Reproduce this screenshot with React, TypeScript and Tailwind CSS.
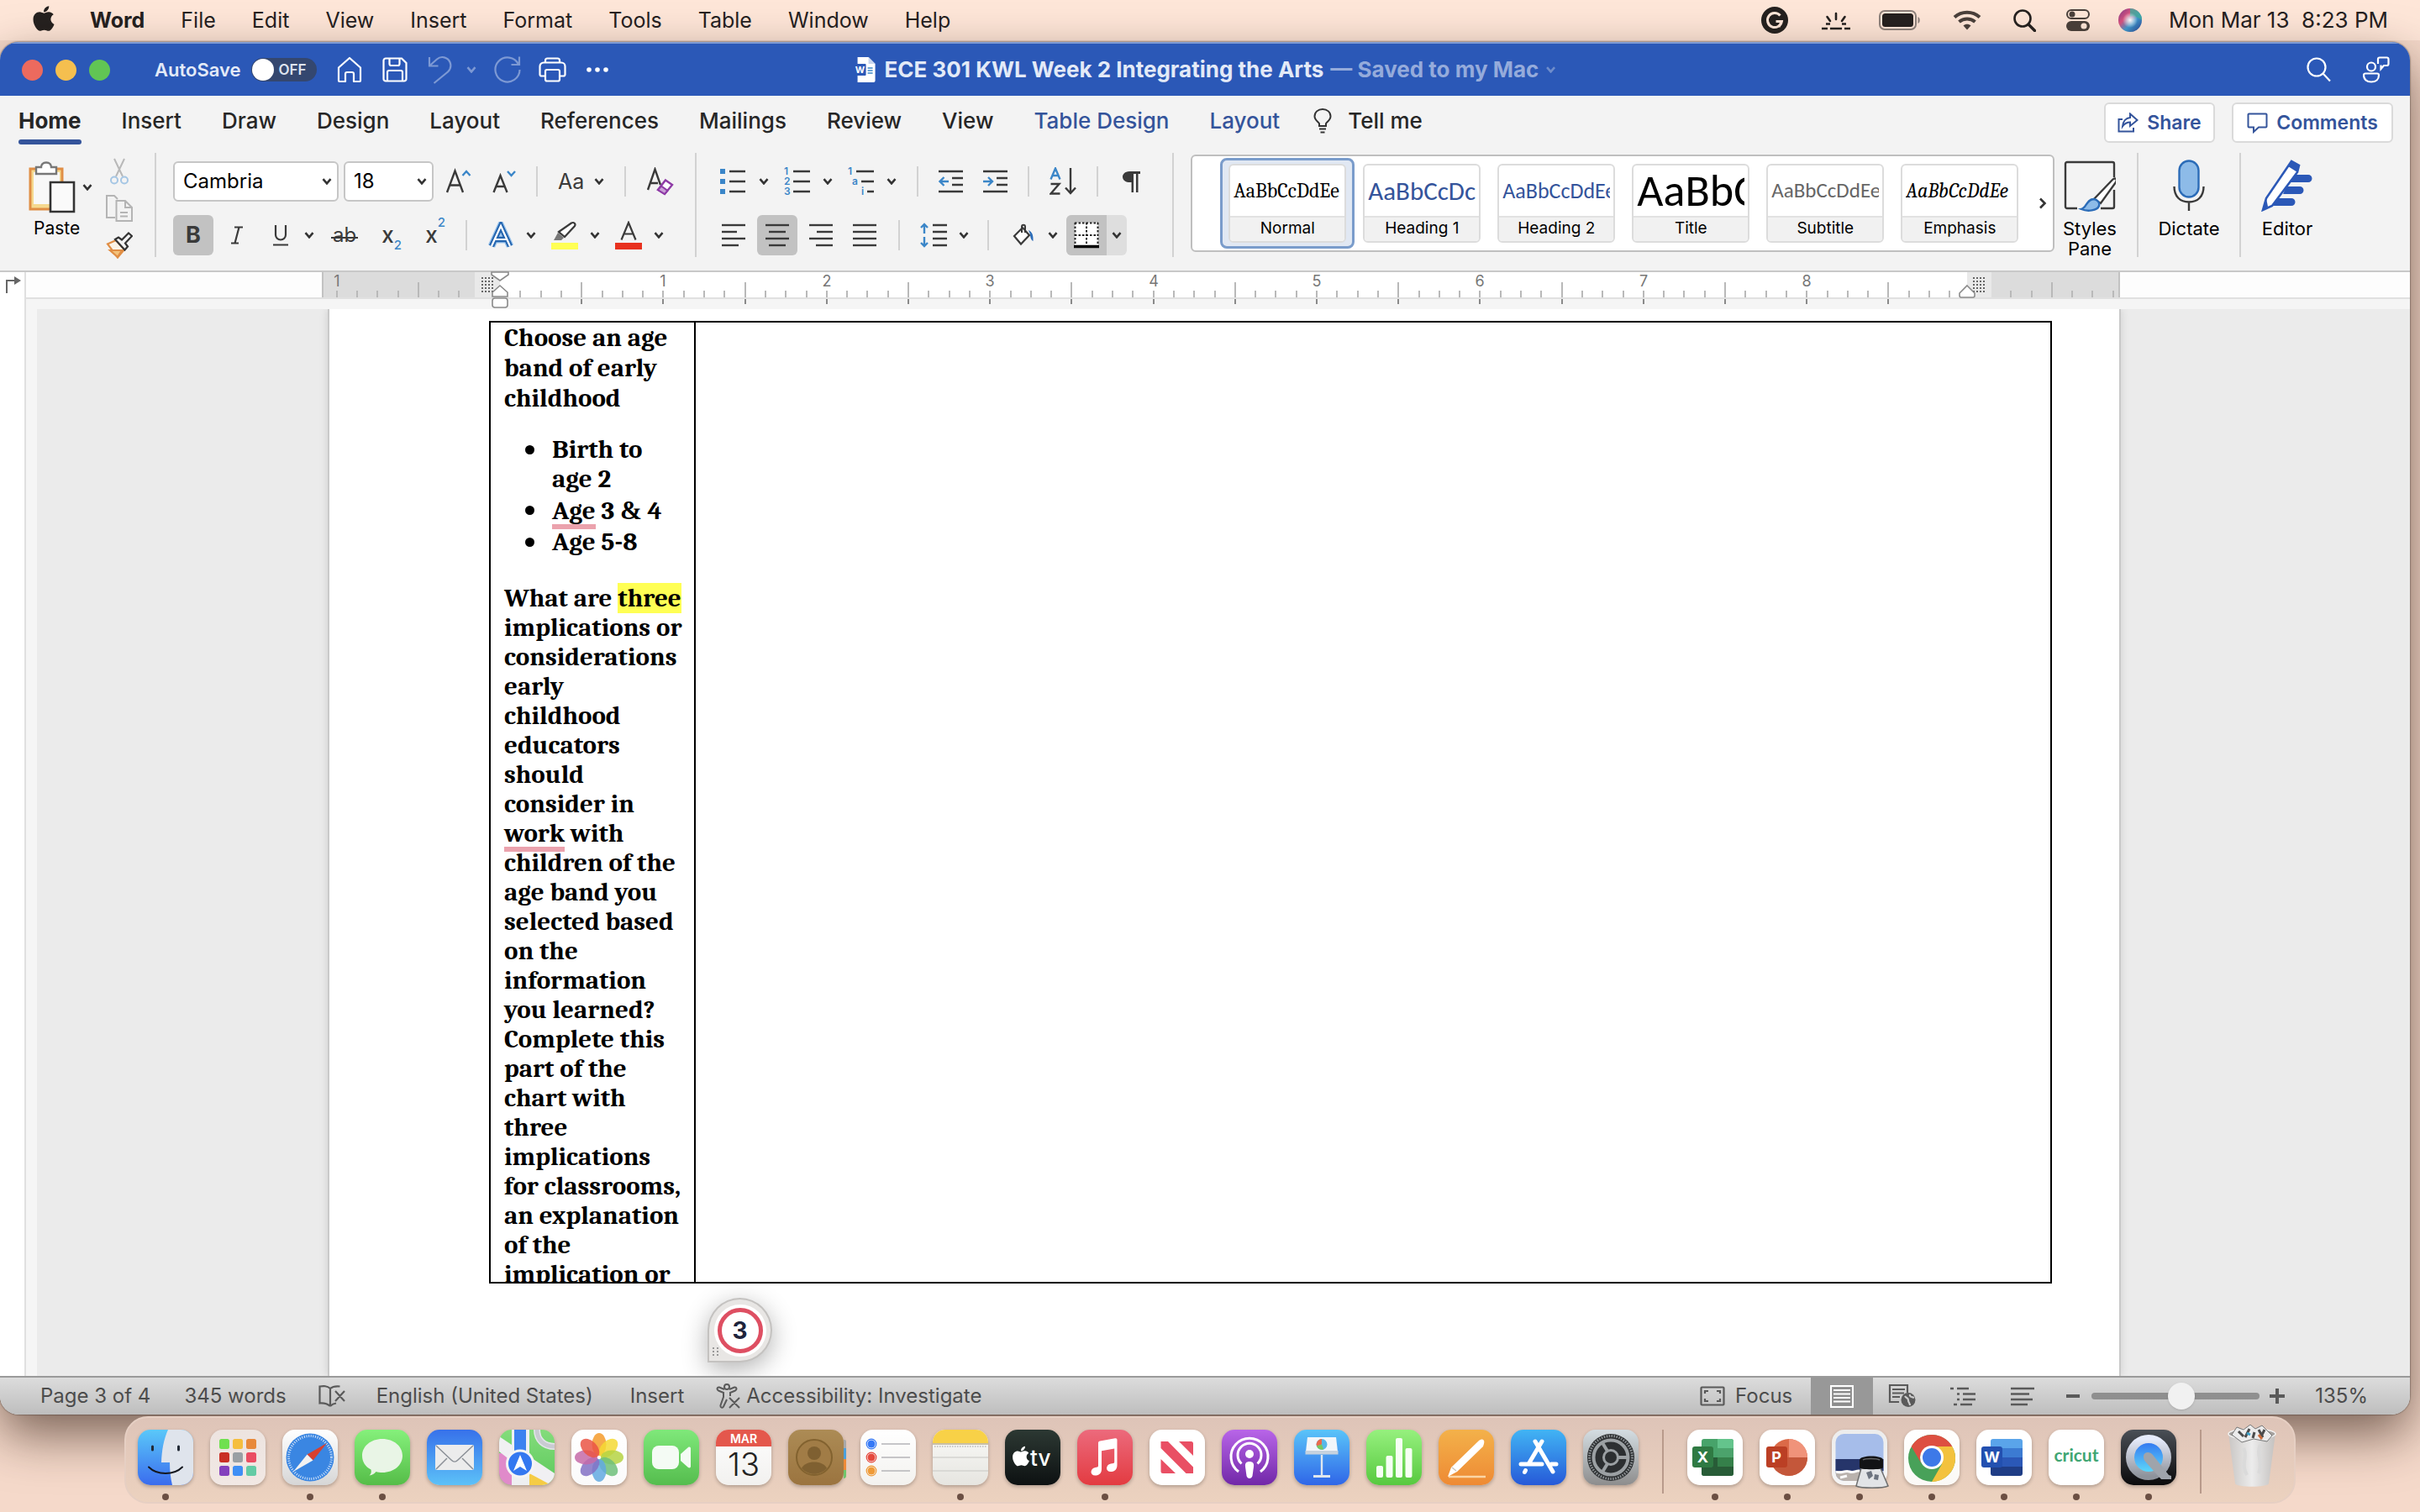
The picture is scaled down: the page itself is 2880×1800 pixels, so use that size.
import React from "react";
import { FaApple } from "react-icons/fa";

const INK = "#3a3a3a";
const BLUE = "#3b86c8";

/* ---------- small shared pieces ---------- */

function Chevron({ color = "#333", className = "" }: { color?: string; className?: string }) {
  return (
    <svg width="12" height="8" viewBox="0 0 12 8" fill="none" className={`shrink-0 ${className}`}>
      <path d="M1.500 1.200 6 6.400l4.500-5.200" stroke={color} strokeWidth="2.600" />
    </svg>
  );
}

function Sep({ tall = false, className = "" }: { tall?: boolean; className?: string }) {
  return <span className={`block w-[2px] shrink-0 bg-[#d2d2d2] ${tall ? "h-[124px]" : "h-9"} ${className}`} />;
}

function Tool({ label, className = "", children }: { label: string; className?: string; children: React.ReactNode }) {
  return (
    <button type="button" aria-label={label} className={`flex shrink-0 items-center justify-center ${className}`}>
      {children}
    </button>
  );
}

/* ---------- menu bar ---------- */

const menus = ["File", "Edit", "View", "Insert", "Format", "Tools", "Table", "Window", "Help"];

function MenuBar() {
  return (
    <header className="flex h-12 shrink-0 items-center bg-[#fee6d8] pl-[38px] pr-[38px] text-[25px] leading-8 text-[#25211f]">
      <FaApple size={34} className="mb-1 w-7" />
      <nav className="ml-[41px] flex gap-[43px]">
        <button type="button" className="font-bold">Word</button>
        {menus.map((m) => (
          <button type="button" key={m}>{m}</button>
        ))}
      </nav>
      <div className="ml-auto flex items-center">
        <svg width="32" height="32" viewBox="0 0 32 32">
          <circle cx="16" cy="16" r="16" fill="#25211f" />
          <path d="M22.500 10.500A8.500 8.500 0 1 0 24.400 17.500H17.500M24.400 17.500 21 24" fill="none" stroke="#fee6d8" strokeWidth="3" />
        </svg>
        <svg className="ml-10" width="34" height="24" viewBox="0 0 34 24" stroke="#25211f" strokeWidth="2.600" fill="none">
          <path d="M17 4v7M6.500 8l3.500 5M27.500 8 24 13" strokeLinecap="round" />
          <path d="M5 16.500h5M24 16.500h5M0 22h7M10 22h14M27 22h7" />
        </svg>
        <svg className="ml-[34px]" width="50" height="24" viewBox="0 0 50 24">
          <rect x="1" y="1" width="43" height="22" rx="6" fill="none" stroke="#8f837c" strokeWidth="2" />
          <rect x="4" y="4" width="37" height="16" rx="3.500" fill="#25211f" />
          <path d="M46.500 8c3 1.200 3 6.800 0 8z" fill="#8f837c" />
        </svg>
        <svg className="ml-[38px]" width="34" height="24" viewBox="0 0 34 24" fill="none" stroke="#4a403b" strokeWidth="4">
          <path d="M2 8.500C10.500.8 23.500.8 32 8.500" />
          <path d="M7.500 14c5.500-4.800 13.500-4.800 19 0" />
          <path d="M17 23.500l-4.500-5c2.600-2.200 6.400-2.200 9 0z" fill="#4a403b" stroke="none" />
        </svg>
        <svg className="ml-[38px]" width="27" height="27" viewBox="0 0 27 27" fill="none" stroke="#25211f">
          <circle cx="11" cy="11" r="9.500" strokeWidth="2.600" />
          <path d="M18 18l7.500 7.500" strokeWidth="3.400" strokeLinecap="round" />
        </svg>
        <svg className="ml-[36px]" width="28" height="26" viewBox="0 0 28 26">
          <rect x="1" y="1" width="26" height="10" rx="5" fill="none" stroke="#4a403b" strokeWidth="2" />
          <circle cx="7" cy="6" r="3.500" fill="#4a403b" />
          <rect y="14" width="28" height="12" rx="6" fill="#4a403b" />
          <circle cx="21" cy="20" r="3.600" fill="#fee6d8" />
        </svg>
        <svg className="ml-[34px]" width="28" height="28" viewBox="0 0 28 28">
          <defs>
            <linearGradient id="siri" x1="0" y1="0" x2="1" y2="1">
              <stop offset="0" stopColor="#7a3a8c" /><stop offset=".35" stopColor="#d8527f" />
              <stop offset=".6" stopColor="#3f9bd0" /><stop offset="1" stopColor="#2b3f8f" />
            </linearGradient>
            <radialGradient id="siriglow"><stop offset="0" stopColor="#fff" /><stop offset="1" stopColor="#fff" stopOpacity="0" /></radialGradient>
          </defs>
          <circle cx="14" cy="14" r="14" fill="url(#siri)" />
          <path d="M14 0a14 14 0 0 1 14 14c-4-3-9-6-14-4z" fill="#3fae9d" opacity=".8" />
          <circle cx="14" cy="14" r="9" fill="url(#siriglow)" />
        </svg>
        <span className="ml-8 whitespace-pre text-[26px]">Mon Mar 13  8:23 PM</span>
      </div>
    </header>
  );
}

/* ---------- title bar ---------- */

function TitleBar() {
  return (
    <div className="relative flex h-16 shrink-0 items-center border-t-2 border-[#7f9bd4] bg-[#2b58b7] pl-[26px] pr-6 text-[#e3eaf7]">
      <div className="flex gap-[15px]">
        <button type="button" aria-label="Close" className="size-[25px] rounded-full bg-[#ec6a5e]" />
        <button type="button" aria-label="Minimize" className="size-[25px] rounded-full bg-[#f5bf4f]" />
        <button type="button" aria-label="Zoom" className="size-[25px] rounded-full bg-[#61c554]" />
      </div>
      <label className="ml-[53px] flex items-center gap-3 text-[22px] font-semibold leading-7">
        AutoSave
        <span className="relative flex h-7 w-[78px] items-center rounded-full bg-[#34476f]">
          <input type="checkbox" className="absolute inset-0 appearance-none" />
          <span className="ml-px size-[26px] rounded-full bg-white" />
          <span className="ml-[6px] text-[17px] font-semibold leading-6 text-[#dde3ee]">OFF</span>
        </span>
      </label>
      <div className="ml-6 flex items-center">
        <Tool label="Home">
          <svg width="30" height="32" viewBox="0 0 30 32" fill="none" stroke="#fff" strokeWidth="2.200" strokeLinejoin="round">
            <path d="M2 13.500 15 2l13 11.500V29a1 1 0 0 1-1 1h-7v-9a2 2 0 0 0-2-2h-6a2 2 0 0 0-2 2v9H3a1 1 0 0 1-1-1z" />
          </svg>
        </Tool>
        <Tool label="Save" className="ml-6">
          <svg width="30" height="30" viewBox="0 0 30 30" fill="none" stroke="#fff" strokeWidth="2.200">
            <path d="M4 1.500h19l5.500 5.500v19a2.500 2.500 0 0 1-2.500 2.500H4A2.500 2.500 0 0 1 1.500 26V4A2.500 2.500 0 0 1 4 1.500z" />
            <path d="M8.500 1.500v6.500a2 2 0 0 0 2 2h8a2 2 0 0 0 2-2V1.500M6 28.500V18a2 2 0 0 1 2-2h14a2 2 0 0 1 2 2v10.500" />
          </svg>
        </Tool>
        <Tool label="Undo" className="ml-6">
          <svg width="30" height="34" viewBox="0 0 30 34" fill="none" stroke="#7d99d4" strokeWidth="2.200">
            <path d="M2 2v10.500h10.500M2.500 12 11 4.500C16 0 24 2 26.500 8c1.800 4.500.5 8.500-2.500 11.500L7.500 33" />
          </svg>
        </Tool>
        <Tool label="Undo history" className="ml-4"><Chevron color="#7d99d4" /></Tool>
        <Tool label="Redo" className="ml-5">
          <svg width="34" height="34" viewBox="0 0 34 34" fill="none" stroke="#7d99d4" strokeWidth="2.200">
            <path d="M31 1.500V11H21.500M30 10.500A14.500 14.500 0 1 0 31.500 17" />
          </svg>
        </Tool>
        <Tool label="Print" className="ml-5">
          <svg width="33" height="30" viewBox="0 0 33 30" fill="none" stroke="#fff" strokeWidth="2.200">
            <path d="M8 6.500V4a2.500 2.500 0 0 1 2.500-2.500h12A2.500 2.500 0 0 1 25 4v2.500M8 22.500H3.500a2 2 0 0 1-2-2V11A4.500 4.500 0 0 1 6 6.500h21a4.500 4.500 0 0 1 4.500 4.500v9.500a2 2 0 0 1-2 2H25" />
            <rect x="8" y="15" width="17" height="13.500" rx="2" />
          </svg>
        </Tool>
        <Tool label="More" className="ml-6">
          <svg width="26" height="6" viewBox="0 0 26 6" fill="#fff"><circle cx="3" cy="3" r="2.800" /><circle cx="13" cy="3" r="2.800" /><circle cx="23" cy="3" r="2.800" /></svg>
        </Tool>
      </div>
      <div className="absolute inset-y-0 left-1/2 flex -translate-x-1/2 items-center whitespace-nowrap text-[26px] font-bold leading-8">
        <svg width="26" height="30" viewBox="0 0 26 30" className="mr-2.5">
          <path d="M4 0h13l8 8v20a2 2 0 0 1-2 2H4z" fill="#fff" /><path d="M17 0v8h8z" fill="#c9d6ee" />
          <rect x="0" y="8" width="14" height="14" rx="1" fill="#2b58b7" />
          <path d="M16 13h6M16 16h6M16 19h6" stroke="#3b86c8" strokeWidth="1.500" />
          <text x="7" y="19" fontSize="11" fontWeight="700" textAnchor="middle" fill="#fff">W</text>
        </svg>
        <span>ECE 301 KWL Week 2 Integrating the Arts</span>
        <span className="ml-2 text-[#95abdb]">— Saved to my Mac</span>
        <Chevron color="#6f8dcb" className="ml-2" />
      </div>
      <div className="ml-auto flex items-center gap-[38px]">
        <Tool label="Search">
          <svg width="29" height="30" viewBox="0 0 29 30" fill="none" stroke="#fff" strokeWidth="2.200"><circle cx="12" cy="12" r="10.500" /><path d="M19.500 19.500 28 28.500" /></svg>
        </Tool>
        <Tool label="Collaborate">
          <svg width="32" height="32" viewBox="0 0 32 32" fill="none" stroke="#fff" strokeWidth="2.200">
            <circle cx="10" cy="12.500" r="5" /><path d="M3 20.500h14a2 2 0 0 1 2 2c0 5-3.500 8-9 8s-9-3-9-8a2 2 0 0 1 2-2z" />
            <path d="M18 9V3.500a2 2 0 0 1 2-2h8.500a2 2 0 0 1 2 2V9a2 2 0 0 1-2 2h-3.500l-3.500 4v-4.500" />
          </svg>
        </Tool>
      </div>
    </div>
  );
}

/* ---------- ribbon ---------- */

const tabs = ["Insert", "Draw", "Design", "Layout", "References", "Mailings", "Review", "View"];

function TabRow() {
  return (
    <div className="flex h-16 shrink-0 items-center pl-[22px] pr-5">
      <nav className="mb-1 flex gap-12 text-[26px] font-medium leading-8 text-[#262626]">
        <button type="button" className="relative font-bold">
          Home
          <span className="absolute inset-x-0 top-[38px] h-1.5 rounded-full bg-[#34549b]" />
        </button>
        {tabs.map((t) => (
          <button type="button" key={t}>{t}</button>
        ))}
        <button type="button" className="text-[#34549b]">Table Design</button>
        <button type="button" className="text-[#34549b]">Layout</button>
      </nav>
      <button type="button" className="mb-1 ml-10 flex items-center gap-[19px] text-[26px] font-medium leading-8 text-[#262626]">
        <svg width="22" height="30" viewBox="0 0 22 30" fill="none" stroke="#333" strokeWidth="2">
          <path d="M7 21v-3C5 15.500 1.500 13.500 1.500 9.500 1.500 4.500 5.500 1 11 1s9.500 3.500 9.500 8.500c0 4-3.500 6-5.500 8.500v3zM7 24.500h8M8.500 28.500h5" />
        </svg>
        Tell me
      </button>
      <div className="ml-auto flex gap-5 text-[23px] font-semibold leading-7 text-[#34549b]">
        <button type="button" className="flex h-12 w-[132px] items-center justify-center gap-2.5 rounded-md border-2 border-[#dadada] bg-white">
          <svg width="25" height="24" viewBox="0 0 25 24" fill="none" stroke="#34549b" strokeWidth="2"><path d="M6 8H1.500v14.500H19V18M15 1.500l8.500 7.500-8.500 7v-4.500c-4 0-6.500 1.500-9 5 .5-6 4-10 9-10.500z" /></svg>
          Share
        </button>
        <button type="button" className="flex h-12 w-[192px] items-center justify-center gap-2.5 rounded-md border-2 border-[#dadada] bg-white">
          <svg width="25" height="25" viewBox="0 0 25 25" fill="none" stroke="#34549b" strokeWidth="2"><path d="M2.500 1.500h20a1 1 0 0 1 1 1v14a1 1 0 0 1-1 1H14l-6 5.500v-5.500H2.500a1 1 0 0 1-1-1v-14a1 1 0 0 1 1-1z" /></svg>
          Comments
        </button>
      </div>
    </div>
  );
}

function ClipboardGroup() {
  return (
    <div className="flex shrink-0 pl-[34px]">
      <button type="button" className="flex w-[78px] flex-col pt-2.5 text-left">
        <span className="flex items-center gap-1.5">
          <svg width="58" height="62" viewBox="0 0 58 62" className="shrink-0">
            <path d="M2 9h38v48H2z" fill="#f5d98f" stroke="#e08e45" strokeWidth="3" /><path d="M6 13h31v38H6z" fill="#f8f8f8" />
            <path d="M9 15V7h6c0-3 2-5.500 6-5.500S27 4 27 7h6v8z" fill="#fff" stroke="#777" strokeWidth="2.400" />
            <path d="M26 25h28v35H26z" fill="#fafafa" stroke="#333" strokeWidth="2.600" />
          </svg>
          <Chevron />
        </span>
        <span className="mt-1 pl-1.5 text-[21px] leading-7 text-black">Paste</span>
      </button>
      <div className="ml-3.5 flex w-8 flex-col items-center gap-3 pt-1.5">
        <Tool label="Cut">
          <svg width="24" height="32" viewBox="0 0 24 32" fill="none" strokeWidth="2"><path d="M6 1l10 21M18 1 8 22" stroke="#b8b8b8" /><circle cx="6" cy="26.500" r="4" stroke="#a5c6e4" /><circle cx="18" cy="26.500" r="4" stroke="#a5c6e4" /></svg>
        </Tool>
        <Tool label="Copy">
          <svg width="32" height="32" viewBox="0 0 32 32" fill="none" stroke="#b4b4b4" strokeWidth="2"><path d="M11 27H1V1h9l4 4M12.500 7H23l8 8v16H12.500zM23 7v8h8M17 21h9M17 25.500h9" /></svg>
        </Tool>
        <Tool label="Format painter">
          <svg width="32" height="32" viewBox="0 0 32 32" fill="none" strokeWidth="2.200"><path d="M2 14.500 12 10l10 11-8 9.500z" stroke="#e08e45" fill="#fbf3e6" /><path d="M5 22h14l-5 8z" fill="#f3c27b" stroke="#e08e45" /><path d="M11 9l4-2.500 4 3 8-8 4 3.500-8 8.500 3 4-3.500 4z" stroke="#333" fill="#f3f3f3" /></svg>
        </Tool>
      </div>
      <Sep tall className="ml-[26px]" />
    </div>
  );
}

function SelectBox({ label, value, className }: { label: string; value: string; className: string }) {
  return (
    <span className={`relative block h-12 ${className}`}>
      <select aria-label={label} className="h-full w-full appearance-none rounded-md border-2 border-[#c6c6c6] bg-white pl-2.5 text-[24px] leading-8 text-black">
        <option>{value}</option>
      </select>
      <Chevron className="pointer-events-none absolute right-2 top-5" />
    </span>
  );
}

function FontGroup() {
  return (
    <div className="flex shrink-0 flex-col gap-4 pl-5 pt-2.5">
      <div className="flex h-12 items-center">
        <SelectBox label="Font" value="Cambria" className="w-[197px]" />
        <SelectBox label="Font size" value="18" className="ml-1.5 w-[107px]" />
        <Tool label="Grow font" className="ml-3.5">
          <svg width="32" height="32" viewBox="0 0 32 32" fill="none"><path d="M2 29 11.500 3.500 21 29M5.500 20.500h12" stroke={INK} strokeWidth="2.400" /><path d="m20.500 9 4.500-5 4.500 5" stroke={BLUE} strokeWidth="2.400" /></svg>
        </Tool>
        <Tool label="Shrink font" className="ml-6">
          <svg width="28" height="32" viewBox="0 0 28 32" fill="none"><path d="M1.500 29 9.500 9l8 20M4.500 22h10" stroke={INK} strokeWidth="2.400" /><path d="m18 4 4.500 5L27 4" stroke={BLUE} strokeWidth="2.400" /></svg>
        </Tool>
        <Sep className="ml-6" />
        <Tool label="Change case" className="ml-6 gap-3 text-[25px] leading-8 text-[#3a3a3a]">Aa<Chevron /></Tool>
        <Sep className="ml-6" />
        <Tool label="Clear formatting" className="ml-6">
          <svg width="34" height="34" viewBox="0 0 34 34" fill="none"><path d="M2 27 10.500 2.500 17 21M5 19h9" stroke={INK} strokeWidth="2.400" /><path d="M23 15.500 31 21l-9 11-8-5z" fill="#fff" stroke="#8e3aa6" strokeWidth="2.400" /><path d="M18 22.500 25.500 28 22 32l-8-5z" fill="#c9a0d6" stroke="#8e3aa6" strokeWidth="2" /></svg>
        </Tool>
      </div>
      <div className="flex h-12 items-center text-[#3a3a3a]">
        <Tool label="Bold" className="size-12 rounded-md bg-[#c2c2c2] text-[27px] font-bold leading-8">B</Tool>
        <Tool label="Italic" className="ml-[18px] w-5">
          <svg width="18" height="22" viewBox="0 0 18 22" stroke={INK} strokeWidth="2.200"><path d="M6 1.500h10M2 20.500h9M11.500 1.500l-5 19" /></svg>
        </Tool>
        <Tool label="Underline" className="ml-8">
          <svg width="20" height="26" viewBox="0 0 20 26" fill="none" stroke={INK} strokeWidth="2.200"><path d="M4 1v11.500a6 6 0 0 0 12 0V1M1 24.500h18" /></svg>
        </Tool>
        <Chevron className="ml-[18px]" />
        <Tool label="Strikethrough" className="relative ml-5 w-8 text-[24px] leading-8">
          ab<span className="absolute inset-x-0 top-[18px] h-[2px] bg-[#3a3a3a]" />
        </Tool>
        <Tool label="Subscript" className="ml-7 w-6 text-[26px] font-medium leading-8">
          x<sub className="mt-4 text-[15px] leading-4 text-[#3b86c8]">2</sub>
        </Tool>
        <Tool label="Superscript" className="ml-7 w-6 text-[26px] font-medium leading-8">
          x<sup className="mb-4 text-[15px] leading-4 text-[#3b86c8]">2</sup>
        </Tool>
        <Sep className="ml-6" />
        <Tool label="Text effects" className="ml-6">
          <svg width="32" height="32" viewBox="0 0 32 32" fill="none"><path d="M5 29 16 5l11 24M9.500 21h13" stroke="#9cc5ec" strokeWidth="9" /><path d="M5 29 16 5l11 24M9.500 21h13" stroke="#2566b0" strokeWidth="6.500" /><path d="M5 29 16 5l11 24M9.500 21h13" stroke="#fff" strokeWidth="2.200" /></svg>
        </Tool>
        <Chevron className="ml-3.5" />
        <Tool label="Highlight" className="ml-[18px]">
          <svg width="32" height="34" viewBox="0 0 32 34"><rect y="26" width="32" height="8" fill="#ffff54" /><path d="M3 23l5-9 7 6-3 3z" fill="#777" /><path d="M9 13 24 2.500c3-1.500 5.500 1 4 3.500L16 19z" fill="#fff" stroke={INK} strokeWidth="2.200" /></svg>
        </Tool>
        <Chevron className="ml-3.5" />
        <Tool label="Font color" className="ml-[18px]">
          <svg width="32" height="34" viewBox="0 0 32 34"><rect y="26" width="32" height="8" fill="#e8311f" /><path d="M7.500 22.500 16 2l8.500 20.500M10.500 15.500h11" fill="none" stroke={INK} strokeWidth="2.200" /></svg>
        </Tool>
        <Chevron className="ml-3.5" />
      </div>
    </div>
  );
}

function Lines({ rows }: { rows: [number, number][] }) {
  return (
    <svg width="28" height="28" viewBox="0 0 28 28" stroke={INK} strokeWidth="2.400">
      {rows.map(([a, b], i) => (
        <path key={i} d={`M${a} ${2 + i * 8}H${b}`} />
      ))}
    </svg>
  );
}

function ParagraphGroup() {
  return (
    <div className="flex shrink-0 flex-col gap-4 pl-7 pt-2.5">
      <div className="flex h-12 items-center">
        <Tool label="Bullets">
          <svg width="32" height="32" viewBox="0 0 32 32"><path d="M0 1h6v6H0zM0 13h6v6H0zM0 25h6v6H0z" fill={BLUE} /><path d="M11 4h19M11 16h19M11 28h19" stroke={INK} strokeWidth="2.400" /></svg>
        </Tool>
        <Chevron className="ml-3.5" />
        <Tool label="Numbering" className="ml-[18px]">
          <svg width="32" height="34" viewBox="0 0 32 34" className="overflow-visible"><g fontSize="12" fontWeight="600" fill={BLUE}><text x="0" y="9">1</text><text x="0" y="21">2</text><text x="0" y="33">3</text></g><path d="M11 5h20M11 17h20M11 29h20" stroke={INK} strokeWidth="2.400" /></svg>
        </Tool>
        <Chevron className="ml-3.5" />
        <Tool label="Multilevel list" className="ml-[18px]">
          <svg width="32" height="34" viewBox="0 0 32 34" className="overflow-visible"><g fontSize="12" fontWeight="600" fill={BLUE}><text x="0" y="9">1</text><text x="5" y="21">a</text><text x="16" y="33">i</text></g><path d="M10 5h21M16 17h15M23 29h8" stroke={INK} strokeWidth="2.400" /></svg>
        </Tool>
        <Chevron className="ml-3.5" />
        <Sep className="ml-6" />
        <Tool label="Decrease indent" className="ml-6">
          <svg width="29" height="28" viewBox="0 0 29 28" fill="none"><path d="M0 2h29M16 10h13M16 18h13M0 26h29" stroke={INK} strokeWidth="2.400" /><path d="M12 14H2m4.500-5-5 5 5 5" stroke={BLUE} strokeWidth="2.400" /></svg>
        </Tool>
        <Tool label="Increase indent" className="ml-6">
          <svg width="29" height="28" viewBox="0 0 29 28" fill="none"><path d="M0 2h29M16 10h13M16 18h13M0 26h29" stroke={INK} strokeWidth="2.400" /><path d="M0 14h10m-4-5 5 5-5 5" stroke={BLUE} strokeWidth="2.400" /></svg>
        </Tool>
        <Sep className="ml-6" />
        <Tool label="Sort" className="ml-6">
          <svg width="32" height="34" viewBox="0 0 32 34" fill="none" strokeWidth="2.400"><path d="m1.500 14.500 5.500-13 5.500 13M3.500 10h7" stroke={BLUE} /><path d="M1.500 20h10L1.500 31.500h11M25 1v30m-6-6.500 6 6.500 6-6.500" stroke={INK} /></svg>
        </Tool>
        <Sep className="ml-6" />
        <Tool label="Show paragraph marks" className="ml-7">
          <svg width="22" height="26" viewBox="0 0 22 26"><path d="M9 1h13v3h-2.500v22H17V4h-3v22h-2.500V14H8C-1.500 13-1.500 1.500 9 1z" fill={INK} /></svg>
        </Tool>
      </div>
      <div className="flex h-12 items-center">
        <Tool label="Align left" className="ml-0.5"><Lines rows={[[0, 28], [0, 18], [0, 28], [0, 20]]} /></Tool>
        <Tool label="Center" className="ml-3.5 size-12 rounded-md bg-[#c2c2c2]"><Lines rows={[[0, 28], [4, 24], [0, 28], [4, 24]]} /></Tool>
        <Tool label="Align right" className="ml-3.5"><Lines rows={[[0, 28], [9, 28], [0, 28], [8, 28]]} /></Tool>
        <Tool label="Justify" className="ml-6"><Lines rows={[[0, 28], [0, 28], [0, 28], [0, 28]]} /></Tool>
        <Sep className="ml-[26px]" />
        <Tool label="Line spacing" className="ml-6">
          <svg width="32" height="30" viewBox="0 0 32 30" fill="none" strokeWidth="2.400"><path d="M15 3h17M15 11h17M15 19h17M15 27h17" stroke={INK} /><path d="M5 13V2M1 6l4-4 4 4M5 17v11m-4-4 4 4 4-4" stroke={BLUE} /></svg>
        </Tool>
        <Chevron className="ml-3.5" />
        <Sep className="ml-[22px]" />
        <Tool label="Shading" className="ml-7">
          <svg width="26" height="28" viewBox="0 0 26 28" fill="none"><path d="M12 5 2 15l8 9.500L20 14z" fill="#fff" stroke={INK} strokeWidth="2.200" /><path d="M11 11V4c0-3 4-3 4 0v7" stroke={INK} strokeWidth="2" /><path d="M19 8c4 2 6 5 5.500 13-2.500-1-3.500-5-3.500-8z" fill="#2b6cb8" /></svg>
        </Tool>
        <Chevron className="ml-4" />
        <div className="ml-2.5 flex h-12 overflow-hidden rounded-md bg-[#dedede]">
          <Tool label="Borders" className="w-12 bg-[#c2c2c2]">
            <svg width="30" height="32" viewBox="0 0 30 32" fill="#fff"><path d="M1 1h28v30H1z" /><path d="M1 1.500h28M1 16h28M1.500 1v28M15 1v28M28.500 1v28" stroke="#222" strokeWidth="2" strokeDasharray="2.500 2" /><path d="M0 29.500h30" stroke="#000" strokeWidth="3.500" /></svg>
          </Tool>
          <Tool label="Border options" className="w-6"><Chevron /></Tool>
        </div>
      </div>
    </div>
  );
}

const styleCards = [
  { name: "Normal", sample: "AaBbCcDdEe", cls: "text-[24px] text-black [font-family:Cambria,'Liberation_Serif',serif]", on: true },
  { name: "Heading 1", sample: "AaBbCcDc", cls: "text-[31px] text-[#34549b] [font-family:Calibri,Lato,sans-serif]" },
  { name: "Heading 2", sample: "AaBbCcDdEe", cls: "text-[26px] text-[#34549b] [font-family:Calibri,Lato,sans-serif]" },
  { name: "Title", sample: "AaBbCc", cls: "text-[54px] text-black [font-family:Calibri,Lato,sans-serif]" },
  { name: "Subtitle", sample: "AaBbCcDdEe", cls: "text-[25px] text-[#666] [font-family:Calibri,Lato,sans-serif]" },
  { name: "Emphasis", sample: "AaBbCcDdEe", cls: "text-[24px] italic text-black [font-family:Cambria,'Liberation_Serif',serif]" },
];

function StyleGallery() {
  return (
    <div className="ml-5 mt-0.5 flex h-[116px] min-w-0 flex-1 items-center overflow-hidden rounded-md border-2 border-[#bfbfbf] bg-white pl-[33px]">
      {styleCards.map((s) => (
        <button
          type="button"
          key={s.name}
          className={`flex h-[108px] w-40 shrink-0 items-center justify-center rounded-lg border-[3px] ${s.on ? "border-[#7a9ccb] bg-[#e1e8f3]" : "border-transparent"}`}
        >
          <span className="flex h-[94px] w-[140px] flex-col overflow-hidden rounded-md border-2 border-[#dcdcdc] bg-white">
            <span className="mx-1 flex flex-1 items-center overflow-hidden">
              <span className={`leading-[60px] ${s.cls}`}>{s.sample}</span>
            </span>
            <span className="h-[30px] border-t-2 border-[#e2e2e2] bg-[#f1f1f1] text-[19px] leading-[26px] text-black">{s.name}</span>
          </span>
        </button>
      ))}
      <Tool label="More styles" className="ml-3.5">
        <svg width="10" height="14" viewBox="0 0 10 14" fill="none"><path d="m2 1.500 5.500 5.500L2 12.500" stroke="#333" strokeWidth="2.600" /></svg>
      </Tool>
    </div>
  );
}

function BigButton({ label, className, children }: { label: string; className: string; children: React.ReactNode }) {
  return (
    <button type="button" className={`flex shrink-0 flex-col items-center pt-2 text-[22px] leading-6 text-black ${className}`}>
      {children}
      <span className="mt-2 w-min">{label}</span>
    </button>
  );
}

function Ribbon() {
  return (
    <div className="flex h-[146px] shrink-0 border-b-2 border-[#c8c8c8] pt-1">
      <ClipboardGroup />
      <FontGroup />
      <Sep tall className="ml-6" />
      <ParagraphGroup />
      <Sep tall className="ml-[38px]" />
      <StyleGallery />
      <BigButton label="Styles Pane" className="w-[84px]">
        <svg width="62" height="62" viewBox="0 0 62 62">
          <path d="M16 58H4a2 2 0 0 1-2-2V5a2 2 0 0 1 2-2h54a2 2 0 0 1 2 2v16M60 36v20a2 2 0 0 1-2 2H44" fill="none" stroke="#3a3a3a" strokeWidth="2.400" />
          <path d="M58 24c3-3 6-1 4 3L44 52l-8-5z" fill="#fff" stroke="#3a3a3a" strokeWidth="2.400" />
          <path d="M36 47c4 1 7 4 6 8-2 6-14 7-21 4 6-1 6-12 15-12z" fill="#8dbbe8" stroke="#2b6cb8" strokeWidth="2.400" />
        </svg>
      </BigButton>
      <Sep tall className="ml-3.5" />
      <BigButton label="Dictate" className="w-[120px]">
        <svg width="38" height="62" viewBox="0 0 38 62" fill="none">
          <rect x="7.500" y="1.500" width="23" height="43" rx="11.500" fill="#8dbbe8" stroke="#2b6cb8" strokeWidth="2.400" />
          <path d="M1.500 32c0 12 7 18.500 17.500 18.500S36.500 44 36.500 32M19 50.500V61" stroke="#3a3a3a" strokeWidth="2.400" />
        </svg>
      </BigButton>
      <Sep tall />
      <BigButton label="Editor" className="mr-[91px] w-[110px]">
        <svg width="62" height="62" viewBox="0 0 62 62">
          <path d="M38 18h18a4.500 4.500 0 0 1 0 9H30zM30 32h16a4.500 4.500 0 0 1 0 9H26zM20 46h16a4.500 4.500 0 0 1 0 9H10z" fill="#2b58b7" />
          <path d="m36 2 9 5-2 8-30 40-11 5 4-14z" fill="#fff" stroke="#2b58b7" strokeWidth="2.600" /><path d="m36 2 9 5-2 8-11-7zM6 46l-4 14 6-4z" fill="#2b58b7" />
        </svg>
      </BigButton>
    </div>
  );
}

/* ---------- ruler ---------- */

const STEP = 24.3;
const ORIGIN = 212;

function Grip() {
  return (
    <svg width="14" height="18" viewBox="0 0 14 18" className="mx-auto" stroke="#666" strokeWidth="2" strokeDasharray="2 2">
      <path d="M0 1h14M0 5h14M0 9h14M0 13h14M0 17h14" />
    </svg>
  );
}

function Ruler() {
  const ticks: { x: number; n: number }[] = [];
  for (let n = -8; n <= 79; n++) ticks.push({ x: Math.round(ORIGIN + n * STEP), n });
  return (
    <div className="flex h-11 shrink-0 bg-[#f5f5f5]">
      <div className="w-[31px] shrink-0 border-r-2 border-[#e0e0e0] bg-white pt-1">
        <svg width="24" height="22" viewBox="0 0 24 22" className="mx-auto" fill="none"><path d="M5 21V6h11" stroke="#666" strokeWidth="2" /><path d="m14 1 8 5-8 5z" fill="#666" /></svg>
      </div>
      <div className="flex h-8 min-w-0 flex-1 justify-center border-b-2 border-[#e0e0e0] bg-[#fdfdfd] pl-1.5">
        <div className="relative flex w-[2140px] shrink-0 border-x-2 border-[#c2c2c2]">
          <div className="w-[180px] bg-[#dcdcdc]" />
          <div className="flex w-[30px] items-center bg-[#e9e9e9]"><Grip /></div>
          <div className="flex-1 bg-white" />
          <div className="flex w-[29px] items-center bg-[#e9e9e9]"><Grip /></div>
          <div className="w-[151px] bg-[#dcdcdc]" />
          <svg className="absolute -left-0.5 top-0 overflow-visible" width="2140" height="44" viewBox="0 0 2140 44">
            {ticks.map(({ x, n }) => {
              const hidden = n === 0 || n === 72 || n === -1 || n === 73;
              const half = n % 8 === 4 || n % 8 === -4;
              const whole = n % 8 === 0;
              return hidden ? null : (
                <g key={n}>
                  <path d={`M${x} ${half ? 12 : 22}V30`} stroke="#b9b9b9" strokeWidth="2" />
                  {(half || whole) && n > 0 && n < 72 && <path d={`M${x} 32v6`} stroke="#8a8a8a" strokeWidth="2" />}
                  {whole && <text x={x} y="17" fontSize="18" textAnchor="middle" fill="#777">{Math.abs(n / 8)}</text>}
                </g>
              );
            })}
            <g fill="#fff" stroke="#8a8a8a" strokeWidth="1.600">
              <path d="M202 0h20v3l-10 7-10-7z" />
              <path d="m212 16 9 8v5h-18v-5z" />
              <rect x="203" y="31" width="18" height="11" rx="3" />
              <path d="m1958 16 9 9v3a2 2 0 0 1-2 2h-14a2 2 0 0 1-2-2v-3z" />
            </g>
          </svg>
        </div>
      </div>
    </div>
  );
}

/* ---------- document ---------- */

const before = ["implications or", "considerations", "early", "childhood", "educators", "should", "consider in"];
const after = [
  "children of the", "age band you", "selected based", "on the", "information", "you learned?", "Complete this", "part of the",
  "chart with", "three", "implications", "for classrooms,", "an explanation", "of the", "implication or",
];

function Flagged({ children }: { children: React.ReactNode }) {
  return (
    <span className="relative">
      <span className="absolute inset-x-0 bottom-[-4px] h-1.5 bg-[#eba2ad]" />
      <span className="relative">{children}</span>
    </span>
  );
}

function Bullet({ children }: { children: React.ReactNode }) {
  return (
    <li className="relative before:absolute before:-left-8 before:top-3 before:size-[11px] before:rounded-full before:bg-black">
      {children}
    </li>
  );
}

function Document() {
  return (
    <div className="flex min-h-0 flex-1">
      <div className="w-[31px] shrink-0 border-r-2 border-[#e0e0e0] bg-white" />
      <div className="w-[13px] shrink-0 bg-[#f5f5f5]" />
      <main className="relative min-w-0 flex-1 overflow-hidden bg-[#ebebeb] pl-0.5">
        <div className="mx-auto h-full w-[2134px] border-x-2 border-[#c9c9c9] bg-white pt-3.5 shadow-[0_0_10px_rgba(0,0,0,0.12)]">
          <table className="ml-[190px] w-[1860px] border-collapse text-[31px] font-bold leading-[35px] text-black [font-family:Cambria,'Liberation_Serif',serif]">
            <tbody>
              <tr>
                <td className="w-[244px] border-2 border-black p-0 align-top">
                  <div className="h-[1142px] overflow-hidden whitespace-nowrap pl-4">
                    <p className="leading-9">Choose an age<br />band of early<br />childhood</p>
                    <ul className="mt-[26px] flex flex-col gap-0.5 pl-[57px]">
                      <Bullet>Birth to<br />age 2</Bullet>
                      <Bullet><Flagged>Age</Flagged> 3 <span className="[font-family:'Liberation_Serif',serif]">&amp;</span> 4</Bullet>
                      <Bullet>Age 5-8</Bullet>
                    </ul>
                    <p className="mt-8">
                      What are <mark className="bg-[#ffff54] text-black">three</mark><br />
                      {before.map((l) => <React.Fragment key={l}>{l}<br /></React.Fragment>)}
                      <Flagged>work</Flagged> with<br />
                      {after.map((l) => <React.Fragment key={l}>{l}<br /></React.Fragment>)}
                    </p>
                  </div>
                </td>
                <td className="border-2 border-black" />
              </tr>
            </tbody>
          </table>
        </div>
        <button
          type="button"
          aria-label="3 writing suggestions"
          className="absolute bottom-4 left-[798px] flex size-[77px] items-center justify-center rounded-full rounded-bl-lg border-2 border-[#c4c2c0] bg-[#e8e6e4] shadow-[0_8px_30px_rgba(0,0,0,0.3)]"
        >
          <span className="flex size-[62px] items-center justify-center rounded-full bg-white">
            <span className="flex size-[54px] items-center justify-center rounded-full border-[5px] border-[#de4f62] text-[28px] font-bold leading-8 text-[#1f243c]">3</span>
          </span>
          <svg className="absolute bottom-1 left-1" width="8" height="12" viewBox="0 0 8 12" fill="#999"><path d="M0 0h2v2H0zM5 0h2v2H5zM0 4h2v2H0zM5 4h2v2H5zM0 8h2v2H0zM5 8h2v2H5z" /></svg>
        </button>
      </main>
    </div>
  );
}

/* ---------- status bar ---------- */

function StatusBar() {
  return (
    <footer className="flex h-[46px] shrink-0 items-center border-t-2 border-[#9a9a9a] bg-linear-to-b from-[#dcdcdc] to-[#bebebe] pl-12 pr-[50px] text-[24px] leading-7 text-[#4c4c4c]">
      <span>Page 3 of 4</span>
      <span className="ml-10">345 words</span>
      <svg className="ml-[38px]" width="33" height="27" viewBox="0 0 33 27" fill="none" stroke="#5a5a5a" strokeWidth="2.200"><path d="M14 4C10 .5 6 1 1.500 1.500v20C6 21 10 21.500 14 25M14 4v21M14 4c3.500-3 7-3 11.500-2.500M14 25c2-2 4-3 7-3.500M20 7l11 12M31 7 20 19" /></svg>
      <span className="ml-9">English (United States)</span>
      <span className="ml-11">Insert</span>
      <svg className="ml-[38px]" width="30" height="30" viewBox="0 0 30 30" fill="none" stroke="#5a5a5a" strokeWidth="2"><circle cx="13" cy="4" r="3" /><path d="M10 7 4 4.500C1.500 4 .5 7 3 8.500L9 11v5L5.500 26c-.5 3 2.500 3.500 3.500 1.500L13 19M16 7l6-2.500c2.500-.5 3.500 2.500 1 4L17 11v4M16 17l12 12M28 17 16 29" /></svg>
      <span className="ml-1.5">Accessibility: Investigate</span>
      <div className="ml-auto flex h-full items-center">
        <button type="button" className="flex items-center gap-3">
          <svg width="30" height="24" viewBox="0 0 30 24" fill="none" stroke="#5a5a5a" strokeWidth="2.200"><rect x="1.500" y="1.500" width="27" height="21" rx="1" /><path d="M6 9V6h4M20 6h4v3M24 15v3h-4M10 18H6v-3" /></svg>
          Focus
        </button>
        <Tool label="Print layout" className="ml-[22px] h-full w-[74px] bg-[#989898]">
          <svg width="28" height="27" viewBox="0 0 28 27" fill="#8c8c8c"><rect x="1" y="1" width="26" height="25" stroke="#fff" strokeWidth="2.200" /><path d="M4 6h20M4 10.500h20M4 15h20M4 19.500h20" stroke="#fff" strokeWidth="2" /></svg>
        </Tool>
        <Tool label="Web layout" className="ml-[18px]">
          <svg width="34" height="28" viewBox="0 0 34 28" fill="none" stroke="#5a5a5a" strokeWidth="2.200"><path d="M13 21H2V1h21v9M5 6h15M5 10.500h14M5 15h9" /><circle cx="24" cy="18.500" r="8.500" fill="#5a5a5a" stroke="none" /><path d="M20 14c2 3 4 2 4 5s2 3 2 6M26 12c-1 3 3 3 5 4" stroke="#ccc" /></svg>
        </Tool>
        <Tool label="Outline" className="ml-10">
          <svg width="30" height="24" viewBox="0 0 30 24" stroke="#5a5a5a" strokeWidth="2.400"><path d="M0 3h4M8 3h14M8 9.500h3M15 9.500h15M8 16h3M15 16h15M4 22h4M12 22h14" /></svg>
        </Tool>
        <Tool label="Draft" className="ml-[42px]">
          <svg width="28" height="24" viewBox="0 0 28 24" stroke="#5a5a5a" strokeWidth="2.400"><path d="M0 3h28M0 9.500h22M0 16h26M0 22h20" /></svg>
        </Tool>
        <Tool label="Zoom out" className="ml-[38px]"><span className="h-1 w-4 bg-[#5a5a5a]" /></Tool>
        <input
          type="range"
          aria-label="Zoom"
          min={0}
          max={100}
          defaultValue={54}
          className="ml-3.5 h-8 w-[200px] appearance-none bg-transparent [&::-webkit-slider-runnable-track]:h-2 [&::-webkit-slider-runnable-track]:rounded-full [&::-webkit-slider-runnable-track]:bg-[#8f8f8f] [&::-webkit-slider-thumb]:-mt-3 [&::-webkit-slider-thumb]:size-8 [&::-webkit-slider-thumb]:appearance-none [&::-webkit-slider-thumb]:rounded-full [&::-webkit-slider-thumb]:bg-[#f1f1f1] [&::-webkit-slider-thumb]:shadow"
        />
        <Tool label="Zoom in" className="ml-3">
          <svg width="18" height="18" viewBox="0 0 18 18" stroke="#5a5a5a" strokeWidth="4"><path d="M9 0v18M0 9h18" /></svg>
        </Tool>
        <span className="ml-9">135%</span>
      </div>
    </footer>
  );
}

/* ---------- dock ---------- */

function Grad({ id, a, b }: { id: string; a: string; b: string }) {
  return <linearGradient id={id} x1="0" y1="0" x2="0" y2="1"><stop offset="0" stopColor={a} /><stop offset="1" stopColor={b} /></linearGradient>;
}

const petals = ["#f59b2c", "#f4d934", "#b5d443", "#6fc07a", "#62a9e0", "#8271c4", "#c56aa8", "#ea5545"];
const pads = ["#6fe04f", "#f5be3e", "#e8893a", "#c92f25", "#9aa0a4", "#ea4d62", "#8440bd", "#3f8ff5", "#63cba5"];

type App = { name: string; from: string; to: string; open?: boolean; art: React.ReactNode; over?: React.ReactNode };

const apps: App[] = [
  { name: "Finder", from: "#5ac8f9", to: "#3a6cee", open: true, art: (<>
    <path d="M36 0h30v66H41c-2-8-3-17-3-27H28C28.500 24 31 11 36 0z" fill="#dfe4ec" />
    <path d="M17.500 20v4M48.500 20v4" stroke="#222a36" strokeWidth="3" strokeLinecap="round" />
    <path d="M13 44.500c10 10 30 10 40 0" fill="none" stroke="#15181f" strokeWidth="2" strokeLinecap="round" /></>) },
  { name: "Launchpad", from: "#ede4e0", to: "#f1e8e4", art: (<>
    {pads.map((c, i) => <rect key={c} x={11 + (i % 3) * 16} y={11 + Math.floor(i / 3) * 16} width="12" height="12" rx="2.500" fill={c} />)}</>) },
  { name: "Safari", from: "#ffffff", to: "#d6d6d6", open: true, art: (<>
    <circle cx="33" cy="33" r="28.500" fill="#3a86e2" /><circle cx="33" cy="33" r="25.500" fill="none" stroke="#d3e5fa" strokeWidth="3" strokeDasharray="1 1.670" />
    <path d="M53 16 29.500 29.500l7 7z" fill="#d8402f" /><path d="M13 50l16.500-20.500 7 7z" fill="#f2f2f2" /></>) },
  { name: "Messages", from: "#85f07b", to: "#55bd48", open: true, art: (
    <path d="M33 11c14 0 24 9 24 20s-10 20-24 20c-3 0-5-.3-7.500-1-2 2.500-4.500 4-8 4.500 2-1.500 2.800-4 2-7C12.500 44 9 38 9 31c0-11 10-20 24-20z" fill="#e9f5e6" />) },
  { name: "Mail", from: "#3771ea", to: "#5cc1f8", art: (<>
    <rect x="10" y="18" width="46" height="30" rx="2" fill="#ececec" /><path d="m11 19 18 17c3 3 5 3 8 0l18-17M11 47l13-13M55 47 42 34" fill="none" stroke="#8b9097" strokeWidth="1.500" /></>) },
  { name: "Maps", from: "#84dc7b", to: "#5cc95c", art: (<>
    <path d="M0 28h15v38H0z" fill="#e08aca" /><path d="M0 8 66 52v16H54L0 26z" fill="#f0f0f3" /><path d="M36 52v14h26z" fill="#f5cc45" />
    <path d="M15 0h21v66H15z" fill="#eef0f2" /><path d="M18 0h14v40H18z" fill="#3c82f0" />
    <path d="M45 0c0 12 8 20 21 20" fill="none" stroke="#e4e5ea" strokeWidth="8" /><path d="M45 0c0 12 8 20 21 20" fill="none" stroke="#c9cbd2" strokeWidth="5" />
    <circle cx="25" cy="40.500" r="15.500" fill="#3478f0" stroke="#f4f4f4" strokeWidth="3" /><path d="m25 30 8 19-8-5-8 5z" fill="#fff" /></>) },
  { name: "Photos", from: "#ffffff", to: "#fafafa", art: (<>
    {petals.map((c, i) => <ellipse key={c} cx="33" cy="17.500" rx="8.500" ry="13.500" fill={c} opacity=".85" transform={`rotate(${i * 45} 33 33)`} />)}</>) },
  { name: "FaceTime", from: "#7fe87a", to: "#55bd4e", art: (<>
    <rect x="10" y="19" width="32" height="28" rx="8" fill="#f4fbf4" /><path d="m44 29 9-8c2-1 3 0 3 1.500v21c0 1.500-1 2.500-3 1.500l-9-8z" fill="#f4fbf4" /></>) },
  { name: "Calendar", from: "#fefefe", to: "#f2f1ef", art: (<>
    <path d="M0 0h66v20H0z" fill="#e4574c" /><text x="33" y="16" fontSize="14" fontWeight="600" textAnchor="middle" fill="#fff">MAR</text>
    <text x="33" y="55" fontSize="38" fontWeight="300" textAnchor="middle" fill="#222">13</text></>) },
  { name: "Contacts", from: "#ac8b55", to: "#9b743f", art: (<>
    <circle cx="31" cy="33" r="21" fill="#a17c46" stroke="#82622f" strokeWidth="2" /><circle cx="31" cy="28" r="8" fill="#7f6031" /><path d="M16 46c4-10 26-10 30 0-8 9-22 9-30 0z" fill="#7f6031" /></>),
    over: (<><path d="M66 12h1a2 2 0 0 1 2 2v8h-3z" fill="#a8a8a8" /><path d="M66 22h3v13h-3z" fill="#4ba0dd" /><path d="M66 35h3v13h-3z" fill="#ee8a36" /><path d="M66 48h3v7a3 3 0 0 1-3 3z" fill="#70c56a" /></>) },
  { name: "Reminders", from: "#ffffff", to: "#f3f2ef", art: (<>
    {["#3478f6", "#e5483c", "#ef9a37"].map((c, i) => <g key={c}><circle cx="13" cy={17 + i * 16} r="4.500" fill={c} /><circle cx="13" cy={17 + i * 16} r="5.800" fill="none" stroke={c} strokeWidth="1.200" /><path d={`M25 ${17 + i * 16}h34`} stroke="#b4b4b8" strokeWidth="1.600" /></g>)}</>) },
  { name: "Notes", from: "#fafaf8", to: "#e6e5e0", open: true, art: (<>
    <path d="M0 0h66v16H0z" fill="#f8d147" /><path d="M0 17h66" stroke="#b8ad8c" strokeWidth="1.500" /><path d="M2 20h62" stroke="#bbb" strokeWidth="1.500" strokeDasharray="1.500 1.500" /><path d="M0 33h66M0 49h66" stroke="#d4d3cf" strokeWidth="1.500" /></>) },
  { name: "TV", from: "#2c3833", to: "#0d1112", art: (<>
    <svg x="8" y="18" width="22" height="27" viewBox="0 0 384 512" fill="#fff"><path d="M318.700 268.700c-.2-36.700 16.400-64.400 50-84.800-18.800-26.900-47.200-41.700-84.700-44.600-35.500-2.800-74.300 20.700-88.500 20.700-15 0-49.400-19.700-76.400-19.700C63.300 141.200 4 184.800 4 273.500q0 39.300 14.400 81.200c12.800 36.700 59 126.700 107.200 125.200 25.200-.6 43-17.900 75.800-17.900 31.800 0 48.300 17.900 76.400 17.900 48.600-.7 90.400-82.500 102.600-119.300-65.200-30.700-61.700-90-61.700-91.900zm-56.600-164.200c27.300-32.400 24.800-61.900 24-72.500-24.100 1.400-52 16.400-67.900 34.900-17.500 19.800-27.800 44.300-25.600 71.900 26.100 2 49.900-11.400 69.500-34.300z" /></svg>
    <text x="30" y="43" fontSize="26" fontWeight="500" fill="#fff">tv</text></>) },
  { name: "Music", from: "#ec6a7c", to: "#e33b41", open: true, art: (
    <path d="M25 16c0-1.500.8-2.300 2.200-2.600L45 10.300c1.800-.3 2.500.5 2.500 2V42c0 5-2.500 7.500-6.500 8-7.500 1-8-8-1-9.500l3-.6c1-.3 1.200-.8 1.200-2V22.500L29 25.200V47c0 4.500-2.500 7-6.500 7.500-7.500 1-8-8-1-9.500l2.500-.5c.8-.3 1-.8 1-2z" fill="#fff" />) },
  { name: "News", from: "#ffffff", to: "#ffffff", art: (
    <path d="M13.500 14H22l30 30.500V52h-8.500L13.500 22zM35 14h14.500a2.500 2.500 0 0 1 2.500 2.500V31zM13.500 35 31 52H16a2.500 2.500 0 0 1-2.500-2.500z" fill="#e94f64" />) },
  { name: "Podcasts", from: "#b865e8", to: "#7128a8", art: (<g fill="none" stroke="#fff" strokeWidth="3">
    <path d="M20 50a22 22 0 1 1 26 0M23.500 40.500a14 14 0 1 1 19 0" /><circle cx="33" cy="29" r="5" fill="#fff" stroke="none" /><path d="M33 38c4 0 5.500 2 5 6l-1.500 11c-1 4-6 4-7 0L28 44c-.5-4 1-6 5-6z" fill="#fff" stroke="none" /></g>) },
  { name: "Keynote", from: "#5ac4f9", to: "#2f66e8", art: (<>
    <path d="M16 9h34l2 17H14z" fill="#f2f6fa" /><path d="M13.500 25h39v4.500h-39z" fill="#c5d2de" /><path d="M33 30v25" stroke="#dfe7ee" strokeWidth="2.400" /><path d="M23 54h20v3H23z" fill="#dfe7ee" />
    <circle cx="33" cy="17.500" r="6.500" fill="#58b8e8" /><path d="M33 17.500V11a6.500 6.500 0 0 0-6 8.500z" fill="#ec6a4c" /><path d="M33 17.500l-6 2a6.500 6.500 0 0 0 8 4z" fill="#7cc95a" /></>) },
  { name: "Numbers", from: "#96f07e", to: "#57c93f", art: (<g fill="#f6fff4"><rect x="12" y="43" width="8" height="14" rx="2" /><rect x="23.500" y="31" width="8" height="26" rx="2" /><rect x="35" y="10" width="8" height="47" rx="2" /><rect x="46.500" y="22" width="8" height="35" rx="2" /></g>) },
  { name: "Pages", from: "#f3b14a", to: "#ee8a34", art: (<>
    <path d="M12 56h44" stroke="#fbd5a5" strokeWidth="2.400" /><path d="M53 12c2 1 1.500 4 0 8L22 50l-11 6 4-11L47 14c2-2 4-3 6-2z" fill="#fff" /><path d="m16 45 5 4" stroke="#c9c4bd" strokeWidth="1.500" /></>) },
  { name: "App Store", from: "#41b4f4", to: "#2659d8", art: (<g stroke="#fff" strokeWidth="5" strokeLinecap="round"><path d="M37 14 21 41M29 14l21 36M12 41h25M48 41h6M17.500 48.500l-1 2" /></g>) },
  { name: "System Settings", from: "#d4dde2", to: "#8d8d8d", art: (<>
    <circle cx="33" cy="33" r="28" fill="#2c2f31" /><circle cx="33" cy="33" r="25.500" fill="none" stroke="#8e9396" strokeWidth="3" strokeDasharray="1.500 1.500" /><circle cx="33" cy="33" r="20.500" fill="none" stroke="#9ba0a3" strokeWidth="4" />
    <circle cx="33" cy="33" r="8.500" fill="none" stroke="#9ba0a3" strokeWidth="3" /><path d="M41 33h13M29 25.500 22 14M29 40.500 22 52" stroke="#9ba0a3" strokeWidth="4" /></>) },
];

const openApps: App[] = [
  { name: "Excel", from: "#ffffff", to: "#ffffff", open: true, art: (<>
    <rect x="17" y="11" width="38" height="44" rx="3" fill="#47a36a" /><path d="M36 11h16a3 3 0 0 1 3 3v8H36z" fill="#64c48c" /><path d="M36 22h19v11H36z" fill="#4ca36c" /><path d="M17 44h38v8a3 3 0 0 1-3 3H20a3 3 0 0 1-3-3z" fill="#285c37" /><rect x="17" y="33" width="19" height="11" fill="#285c37" /><rect x="36" y="33" width="19" height="11" fill="#35804a" />
    <rect x="6" y="20" width="25" height="25" rx="3" fill="#2f7a43" /><text x="18.500" y="39" fontSize="18" fontWeight="700" textAnchor="middle" fill="#fff">X</text></>) },
  { name: "PowerPoint", from: "#ffffff", to: "#ffffff", open: true, art: (<>
    <circle cx="35" cy="33" r="22" fill="#db6a48" /><path d="M35 11a22 22 0 0 1 22 22H35z" fill="#f0937a" /><path d="M13 33h44a22 22 0 0 1-44 0z" fill="#c4573a" />
    <rect x="8" y="20" width="25" height="25" rx="3" fill="#bb3f24" /><text x="20" y="39" fontSize="18" fontWeight="700" textAnchor="middle" fill="#fff">P</text></>) },
  { name: "Preview", from: "#ececec", to: "#f6f6f6", open: true, art: (<>
    <rect x="4.500" y="5" width="57" height="56" rx="10" fill="#a6bdea" /><path d="M4.500 35h57v14h-57z" fill="#26356a" /><path d="M4.500 50c6-3 14 2 30-2v13h-20a10 10 0 0 1-10-10z" fill="#b9b2ad" />
    <path d="M5 50c6 3 10-2 16 0s8-2 12-1M10 57l8-2" stroke="#fafafa" strokeWidth="3" fill="none" /></>),
    over: (<><path d="M35 46h23l9 21c-6 3-32 3-38 0z" fill="#e2e4e7" stroke="#6f6f6f" strokeWidth="1.500" /><path d="m41 51 6-2 2 6-5 4zM51 53l5 1-1 6-5-1z" fill="#6d7480" /><path d="M33 36c0-6 28-6 28 0v9c0 3-28 3-28 0z" fill="#121315" /><path d="M37 36c3-2 16-2 20 0" stroke="#666" strokeWidth="1.500" fill="none" /></>) },
  { name: "Chrome", from: "#ffffff", to: "#fbf9f6", open: true, art: (<>
    <circle cx="33" cy="34" r="28" fill="#48a159" /><path d="M33 20h24.300A28 28 0 0 1 33 62l12-21z" fill="#f3c23e" /><path d="M8.700 20A28 28 0 0 1 57.300 20H33a14 14 0 0 0-12 21z" fill="#dd4f41" />
    <circle cx="33" cy="33" r="14" fill="#fff" /><circle cx="33" cy="33" r="11" fill="#3d79e8" /></>) },
  { name: "Word", from: "#ffffff", to: "#ffffff", open: true, art: (<>
    <path d="M20 11h32a3 3 0 0 1 3 3v8H17v-8a3 3 0 0 1 3-3z" fill="#5aa4ea" /><path d="M17 22h38v11H17z" fill="#3c7bd2" /><path d="M17 33h38v11H17z" fill="#2b58b7" /><path d="M17 44h38v8a3 3 0 0 1-3 3H20a3 3 0 0 1-3-3z" fill="#1f3d86" />
    <rect x="6" y="20" width="25" height="25" rx="3" fill="#2350b0" /><text x="18.500" y="39" fontSize="18" fontWeight="700" textAnchor="middle" fill="#fff">W</text></>) },
  { name: "Cricut", from: "#ffffff", to: "#ffffff", open: true, art: (
    <text x="33" y="38" fontSize="21" fontWeight="700" textAnchor="middle" fill="#3fa673" fontFamily="Lato, sans-serif">cricut</text>) },
  { name: "QuickTime", from: "#4a4f56", to: "#0a0a0b", open: true, art: (<>
    <defs><Grad id="qt-ring" a="#e6ebfb" b="#8e939b" /><Grad id="qt-lens" a="#2f6df0" b="#63e4fb" /></defs>
    <circle cx="33" cy="33" r="22" fill="url(#qt-lens)" stroke="url(#qt-ring)" strokeWidth="10" /><path d="M27 31c1-5 8-5 11-1l19 24 3 1v4H48l-18-20c-2-2-3.500-5-3-8z" fill="#9fa4ab" /></>) },
];

function DockIcon({ app }: { app: App }) {
  const id = `bg-${app.name.replace(/\s/g, "")}`;
  return (
    <button type="button" aria-label={app.name} className="flex shrink-0 flex-col items-center">
      <svg width="66" height="66" viewBox="0 0 66 66" className="overflow-visible rounded-[15px] shadow-[0_2px_4px_rgba(0,0,0,0.25)]">
        <defs>
          <Grad id={id} a={app.from} b={app.to} />
          <clipPath id={`${id}-clip`}><rect width="66" height="66" rx="15" /></clipPath>
        </defs>
        <g clipPath={`url(#${id}-clip)`}>
          <rect width="66" height="66" fill={`url(#${id})`} />
          {app.art}
        </g>
        {app.over}
      </svg>
      <span className={`mt-2.5 size-2 rounded-full ${app.open ? "bg-[#6b4f43]" : ""}`} />
    </button>
  );
}

function Dock() {
  return (
    <div className="relative mx-auto mb-2.5 mt-0.5 flex h-[104px] shrink-0 items-start gap-5 rounded-[28px] border-2 border-[#e6cfc3] bg-linear-to-b from-[#dec4b8] to-[#ecd2bf] px-3.5 pt-3.5">
      {apps.map((a) => <DockIcon key={a.name} app={a} />)}
      <span className="mx-2 h-[76px] w-[2px] bg-[#b89a8b]" />
      {openApps.map((a) => <DockIcon key={a.name} app={a} />)}
      <span className="mx-2 h-[76px] w-[2px] bg-[#b89a8b]" />
      <button type="button" aria-label="Trash" className="-mt-1.5 ml-0.5 mr-1.5">
        <svg width="60" height="76" viewBox="0 0 60 76">
          <defs><linearGradient id="bin"><stop offset="0" stopColor="#c9c6c4" /><stop offset=".5" stopColor="#ececec" /><stop offset="1" stopColor="#c4c1bf" /></linearGradient></defs>
          <path d="M2 10 10 70c1 5 39 5 40 0l8-60z" fill="url(#bin)" />
          <ellipse cx="30" cy="11" rx="28" ry="6" fill="#a5a19e" stroke="#f3f3f3" strokeWidth="1.500" />
          <path d="M6 12 12 3l8 3 8-6 6 5 8-4 6 6 6 6-6 7-16-3-14 4z" fill="#ececec" stroke="#777" />
          <path d="m14 8 6 6M27 5l-5 10M38 6l5 9M33 9l-2 7M45 6l-3 6" stroke="#4b4b4b" strokeWidth="3" /><path d="m38 12 4 5" stroke="#c96a3a" strokeWidth="3" /><path d="m24 10 4 2" stroke="#3aa0c8" strokeWidth="3" />
          <path d="M20 28c6 10-4 18 4 32M40 24c-6 12 4 20-2 34" stroke="#dadada" strokeWidth="4" fill="none" />
        </svg>
      </button>
    </div>
  );
}

export default function App() {
  return (
    <div className="flex h-screen flex-col overflow-hidden bg-[#f5d9ca] [font-family:Inter,'Liberation_Sans',sans-serif]">
      <MenuBar />
      <div className="mr-3 mt-0.5 flex min-h-0 flex-1 flex-col overflow-hidden rounded-[22px] bg-[#f3f3f3] shadow-[0_24px_60px_rgba(40,20,10,0.6),0_0_2px_rgba(0,0,0,0.8)]">
        <TitleBar />
        <TabRow />
        <Ribbon />
        <Ruler />
        <Document />
        <StatusBar />
      </div>
      <Dock />
    </div>
  );
}
